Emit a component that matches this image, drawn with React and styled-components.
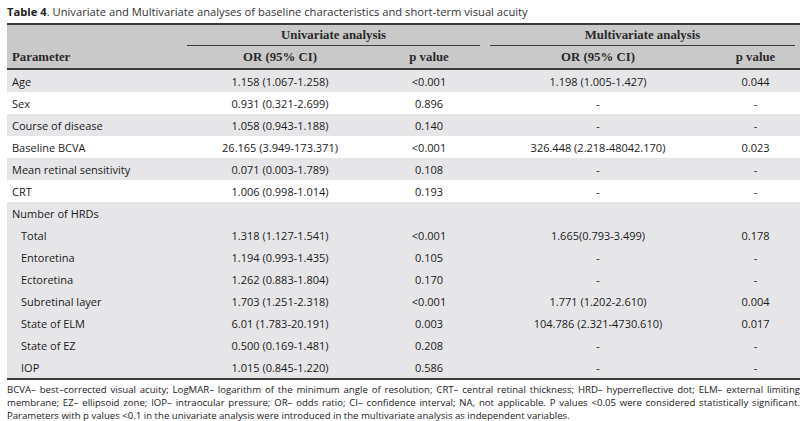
import React from 'react';
import styled, { createGlobalStyle } from 'styled-components';

const GlobalStyle = createGlobalStyle`
  body {
    margin: 0;
    background: #ffffff;
    font-family: "Open Sans", "Liberation Sans", sans-serif;
    color: #222;
  }
`;

const Page = styled.div`
  width: 793px;
  padding: 4px 7px 0;
`;

const Caption = styled.div`
  font-size: 11.2px;
  line-height: 16px;
  color: #333;
  margin-bottom: 3px;
  b {
    font-weight: 700;
    color: #222;
  }
`;

const Table = styled.table`
  width: 793px;
  border-collapse: collapse;
  table-layout: fixed;
  border-top: 2px solid #3a3a3a;
  border-bottom: 2px solid #3a3a3a;
`;

const Head = styled.thead`
  background: #c9c9c9;
  border-bottom: 2px solid #3a3a3a;
`;

const Th = styled.th`
  font-family: "Liberation Serif", "DejaVu Serif", serif;
  font-weight: 700;
  font-size: 12.8px;
  color: #2a2a2a;
  height: ${p => p.$h || 21}px;
  padding: 0 ${p => (p.$left ? '5px' : '0')};
  text-align: ${p => (p.$left ? 'left' : 'center')};
  vertical-align: ${p => p.$valign || 'middle'};
`;

const GroupLabel = styled.div`
  border-bottom: 1px solid #3a3a3a;
  line-height: 20px;
  margin: ${p => p.$margin};
`;

const Row = styled.tr`
  background: ${p => (p.$shade ? '#e6e6e8' : '#ffffff')};
`;

const Td = styled.td`
  font-size: 11px;
  font-weight: 500;
  height: 22px;
  padding: 0;
  padding-left: ${p => (p.$indent ? '14px' : p.$left ? '5px' : '0')};
  text-align: ${p => (p.$left ? 'left' : 'center')};
  color: #1a1a1a;
  white-space: nowrap;
`;

const Note = styled.p`
  margin: 3px 0 0;
  font-size: 9.6px;
  line-height: 13px;
  text-align: justify;
  color: #1a1a1a;
`;

const rows = [
  ['Age', '1.158 (1.067-1.258)', '<0.001', '1.198 (1.005-1.427)', '0.044', true],
  ['Sex', '0.931 (0.321-2.699)', '0.896', '-', '-', false],
  ['Course of disease', '1.058 (0.943-1.188)', '0.140', '-', '-', true],
  ['Baseline BCVA', '26.165 (3.949-173.371)', '<0.001', '326.448 (2.218-48042.170)', '0.023', false],
  ['Mean retinal sensitivity', '0.071 (0.003-1.789)', '0.108', '-', '-', true],
  ['CRT', '1.006 (0.998-1.014)', '0.193', '-', '-', false],
  ['Number of HRDs', '', '', '', '', true],
  ['Total', '1.318 (1.127-1.541)', '<0.001', '1.665(0.793-3.499)', '0.178', true, true],
  ['Entoretina', '1.194 (0.993-1.435)', '0.105', '-', '-', true, true],
  ['Ectoretina', '1.262 (0.883-1.804)', '0.170', '-', '-', true, true],
  ['Subretinal layer', '1.703 (1.251-2.318)', '<0.001', '1.771 (1.202-2.610)', '0.004', true, true],
  ['State of ELM', '6.01 (1.783-20.191)', '0.003', '104.786 (2.321-4730.610)', '0.017', true, true],
  ['State of EZ', '0.500 (0.169-1.481)', '0.208', '-', '-', true, true],
  ['IOP', '1.015 (0.845-1.220)', '0.586', '-', '-', true, true],
];

export default function App() {
  return (
    <Page>
      <GlobalStyle />
      <Caption>
        <b>Table 4</b>. Univariate and Multivariate analyses of baseline characteristics and short-term visual acuity
      </Caption>
      <Table>
        <colgroup>
          <col style={{ width: 180 }} />
          <col style={{ width: 186 }} />
          <col style={{ width: 112 }} />
          <col style={{ width: 226 }} />
          <col style={{ width: 89 }} />
        </colgroup>
        <Head>
          <tr>
            <Th $h={21} />
            <Th colSpan={2} $valign="top">
              <GroupLabel $margin="0 5px 0 0">Univariate analysis</GroupLabel>
            </Th>
            <Th colSpan={2} $valign="top">
              <GroupLabel $margin="0 5px 0 5px">Multivariate analysis</GroupLabel>
            </Th>
          </tr>
          <tr>
            <Th $left $h={22}>Parameter</Th>
            <Th $h={22}>OR (95% CI)</Th>
            <Th $h={22}>p value</Th>
            <Th $h={22}>OR (95% CI)</Th>
            <Th $h={22}>p value</Th>
          </tr>
        </Head>
        <tbody>
          {rows.map(([name, or1, p1, or2, p2, shade, indent]) => (
            <Row key={name} $shade={shade}>
              <Td $left $indent={indent}>{name}</Td>
              <Td>{or1}</Td>
              <Td>{p1}</Td>
              <Td>{or2}</Td>
              <Td>{p2}</Td>
            </Row>
          ))}
        </tbody>
      </Table>
      <Note>
        BCVA– best–corrected visual acuity; LogMAR– logarithm of the minimum angle of resolution; CRT– central retinal thickness; HRD– hyperreflective dot; ELM– external limiting membrane; EZ– ellipsoid zone; IOP– intraocular pressure; OR– odds ratio; CI– confidence interval; NA, not applicable. P values &lt;0.05 were considered statistically significant. Parameters with p values &lt;0.1 in the univariate analysis were introduced in the multivariate analysis as independent variables.
      </Note>
    </Page>
  );
}
